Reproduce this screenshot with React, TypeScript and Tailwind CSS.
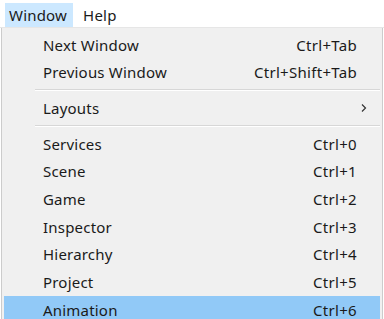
import React from "react";

const font = { fontFamily: '"Noto Sans", "Open Sans", sans-serif' };

type Item = { label: string; shortcut?: string; arrow?: boolean; active?: boolean } | "sep";

const items: Item[] = [
  { label: "Next Window", shortcut: "Ctrl+Tab" },
  { label: "Previous Window", shortcut: "Ctrl+Shift+Tab" },
  "sep",
  { label: "Layouts", arrow: true },
  "sep",
  { label: "Services", shortcut: "Ctrl+0" },
  { label: "Scene", shortcut: "Ctrl+1" },
  { label: "Game", shortcut: "Ctrl+2" },
  { label: "Inspector", shortcut: "Ctrl+3" },
  { label: "Hierarchy", shortcut: "Ctrl+4" },
  { label: "Project", shortcut: "Ctrl+5" },
  { label: "Animation", shortcut: "Ctrl+6", active: true },
];

export default function App() {
  return (
    <div className="w-[384px] h-[319px] overflow-hidden bg-white text-[15px] text-[#1a1a1a]" style={font}>
      <div className="h-[28px] flex items-end bg-white border-b border-[#e6e6e6]">
        <div className="ml-[5px] h-[24px] pl-[4px] pr-[6px] flex items-center bg-[#cce8ff] tracking-[0.2px]">Window</div>
        <div className="h-[24px] pl-[10px] flex items-center tracking-[0.2px]">Help</div>
      </div>
      <div className="ml-[1px] mr-[1px] h-[300px] bg-[#f0f0f0] border-l border-r border-[#cccccc] pt-[3px] px-[2px]">
        {items.map((it, i) =>
          it === "sep" ? (
            <div key={i} className="ml-[31px] my-[3px] h-[2px] border-t border-[#d7d7d7] border-b border-b-white" />
          ) : (
            <div
              key={i}
              className={`h-[27.7px] flex items-center pl-[39px] pr-[23px] ${it.active ? "bg-[#91c9f7]" : ""}`}
            >
              <span className="flex-1 tracking-[0.2px]">{it.label}</span>
              {it.shortcut && <span className="tracking-[0.3px]">{it.shortcut}</span>}
              {it.arrow && (
                <svg width="8" height="10" viewBox="0 0 8 10" className="-mr-[11px]">
                  <path d="M2 1.5 L5.5 5 L2 8.5" fill="none" stroke="#333" strokeWidth="1.2" />
                </svg>
              )}
            </div>
          )
        )}
      </div>
    </div>
  );
}
